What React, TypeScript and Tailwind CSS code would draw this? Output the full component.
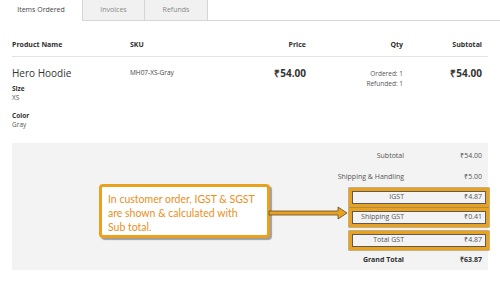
import React from 'react'

const font = { fontFamily: '"Open Sans", "Liberation Sans", sans-serif' }

function SummaryRow({ label, value, bold, boxed }: { label: string; value: string; bold?: boolean; boxed?: boolean }) {
    return (
        <div className="relative flex justify-end items-center h-[20px] pr-[6px]">
            {boxed && (
                <div className="absolute left-[337px] right-[-1px] top-[1px] bottom-[0px] border-[3px] border-[#e9a11e] shadow-[inset_0_0_0_1px_#5a5a5a,0_0_0_0.5px_#8a6a20]" />
            )}
            <div className={`text-right text-[7px] ${bold ? 'font-bold text-[#303030]' : 'text-[#555]'}`}>{label}</div>
            <div className={`w-[78px] text-right text-[7px] ${bold ? 'font-bold text-[#303030]' : 'text-[#555]'}`}>{value}</div>
        </div>
    )
}

export default function App() {
    return (
        <div className="relative w-[500px] h-[299px] bg-white overflow-hidden" style={font}>
            {/* Tabs */}
            <div className="flex h-[21px]">
                <div className="w-[83px] flex items-center justify-center text-[7px] text-[#444] border-r border-[#d6d6d6] bg-white">Items Ordered</div>
                <div className="w-[62px] flex items-center justify-center text-[7px] text-[#888] bg-[#f1f1f1] border-r border-b border-[#d6d6d6]">Invoices</div>
                <div className="w-[63px] flex items-center justify-center text-[7px] text-[#888] bg-[#f1f1f1] border-r border-b border-[#d6d6d6]">Refunds</div>
                <div className="flex-1 border-b border-[#d6d6d6]" />
            </div>

            <div className="px-[12px]">
                {/* Header */}
                <div className="grid grid-cols-[118px_100px_76px_97px_79px] items-end h-[36px] pb-[6px] border-b border-[#e3e3e3] text-[7px] font-bold text-[#303030]">
                    <div>Product Name</div>
                    <div>SKU</div>
                    <div className="text-right">Price</div>
                    <div className="text-right">Qty</div>
                    <div className="text-right">Subtotal</div>
                </div>

                {/* Item */}
                <div className="grid grid-cols-[118px_100px_76px_97px_79px] pt-[10px] h-[86px]">
                    <div>
                        <div className="text-[10px] leading-[12px] text-[#333]">Hero Hoodie</div>
                        <div className="mt-[5px] text-[6.5px] font-bold leading-[9px] text-[#303030]">Size</div>
                        <div className="text-[6.5px] leading-[10px] text-[#555]">XS</div>
                        <div className="mt-[8px] text-[6.5px] font-bold leading-[9px] text-[#303030]">Color</div>
                        <div className="text-[6.5px] leading-[10px] text-[#555]">Gray</div>
                    </div>
                    <div className="text-[6.5px] leading-[12px] text-[#444]">MH07-XS-Gray</div>
                    <div className="text-right text-[10px] font-bold leading-[12px] text-[#333]">₹54.00</div>
                    <div className="text-right text-[6.5px] leading-[10px] text-[#555] pt-[2px]">
                        <div>Ordered: 1</div>
                        <div>Refunded: 1</div>
                    </div>
                    <div className="text-right text-[10px] font-bold leading-[12px] text-[#333]">₹54.00</div>
                </div>

                {/* Totals panel */}
                <div className="bg-[#f3f3f3] h-[127px] pt-[3px]">
                    <SummaryRow label="Subtotal" value="₹54.00" />
                    <div className="h-[1px]" />
                    <SummaryRow label="Shipping & Handling" value="₹5.00" />
                    <SummaryRow label="IGST" value="₹4.87" boxed />
                    <SummaryRow label="Shipping GST" value="₹0.41" boxed />
                    <div className="h-[3px]" />
                    <SummaryRow label="Total GST" value="₹4.87" boxed />
                    <SummaryRow label="Grand Total" value="₹63.87" bold />
                </div>
            </div>

            {/* Annotation callout */}
            <div className="absolute left-[99px] top-[184px] w-[171px] h-[54px] rounded-[4px] border-[3px] border-[#e9a11e] bg-white shadow-[2px_2px_1px_rgba(0,0,0,0.35)] px-[6px] pt-[5px] text-[10.5px] leading-[14px] text-[#e98f1b] whitespace-nowrap" style={{ fontFamily: 'Lato, "Liberation Sans", sans-serif' }}>
                In customer order, IGST &amp; SGST<br />
                are shown &amp; calculated with<br />
                Sub total.
            </div>

            {/* Arrow */}
            <svg className="absolute left-[268px] top-[204px]" width="82" height="18" viewBox="0 0 82 18">
                <path d="M1 7 L70 7 L70 3 L79 9 L70 15 L70 11 L1 11 Z" fill="#e9a11e" stroke="#5a4a2a" strokeWidth="0.8" strokeLinejoin="round" />
            </svg>
        </div>
    )
}
